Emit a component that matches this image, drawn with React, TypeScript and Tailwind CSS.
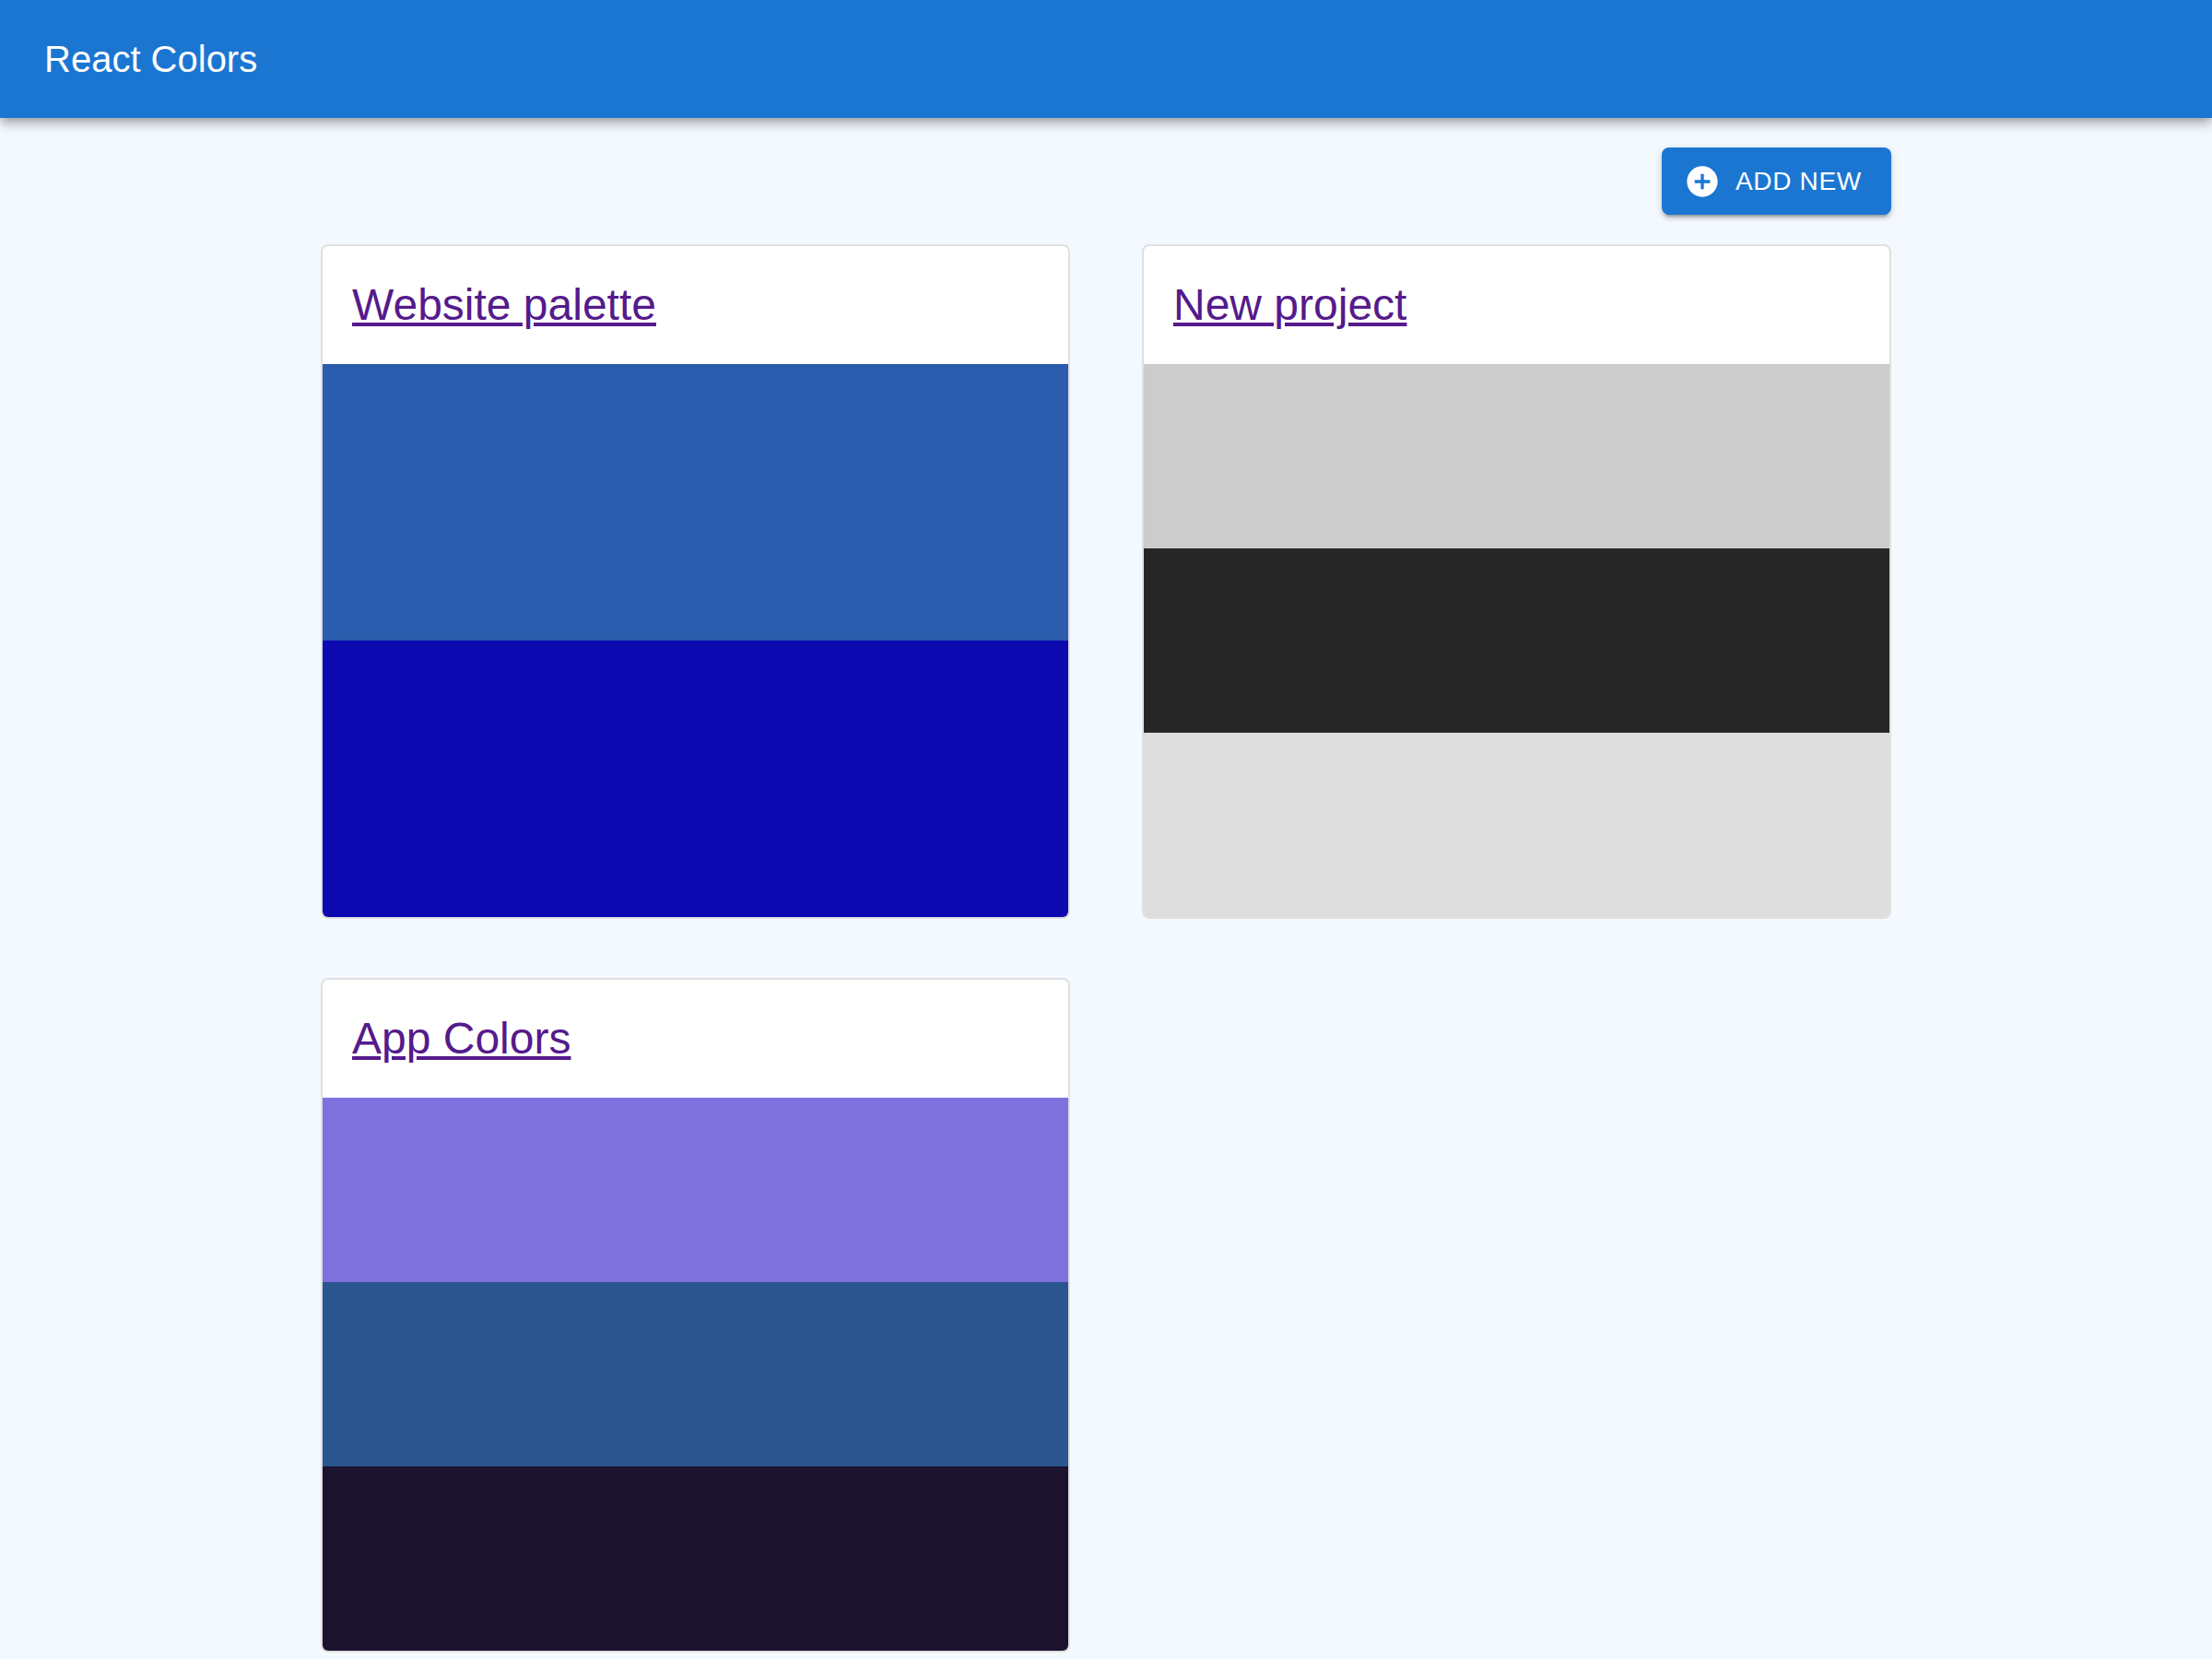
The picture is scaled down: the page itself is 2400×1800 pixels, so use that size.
import React from 'react';
import { MdAddCircle } from 'react-icons/md';

interface Palette {
  id: string;
  name: string;
  colors: string[];
}

const palettes: Palette[] = [
  { id: 'website-palette', name: 'Website palette', colors: ['#2b5cae', '#0c09b0'] },
  { id: 'new-project', name: 'New project', colors: ['#cccccc', '#262626', '#dddddd'] },
  { id: 'app-colors', name: 'App Colors', colors: ['#7e71de', '#2b568f', '#1c132f'] },
];

function Header() {
  return (
    <header className="relative flex h-32 items-center bg-[#1b76d2] px-12 text-white shadow-[0_4px_8px_-2px_rgba(0,0,0,0.2),0_8px_10px_0_rgba(0,0,0,0.14),0_2px_20px_0_rgba(0,0,0,0.12)]">
      <h1 className="text-[40px] leading-16">React Colors</h1>
    </header>
  );
}

function PaletteCard({ palette }: { palette: Palette }) {
  return (
    <article className="overflow-hidden rounded-lg border-2 border-[#e0e0e0] bg-white">
      <h2 className="p-8 text-5xl leading-16">
        <a
          href={`#${palette.id}`}
          className="text-[#551a8b] underline decoration-4 underline-offset-3"
        >
          {palette.name}
        </a>
      </h2>
      <div className="flex h-[600px] flex-col">
        {palette.colors.map((color) => (
          <div key={color} className="flex-1" style={{ backgroundColor: color }} />
        ))}
      </div>
    </article>
  );
}

export default function App() {
  return (
    <div className="min-h-screen bg-[#f4f9ff] font-['Helvetica_Neue','Liberation_Sans',Arial,sans-serif]">
      <Header />
      <main className="mx-auto max-w-[1800px] px-12 pt-8">
        <div className="mb-8 flex justify-end">
          <button
            type="button"
            className="flex cursor-pointer items-center gap-4 rounded-lg bg-[#1b76d2] py-3 pr-8 pl-6 text-[28px] leading-[49px] tracking-wide text-white uppercase shadow-[0_6px_2px_-4px_rgba(0,0,0,0.2),0_4px_4px_0_rgba(0,0,0,0.14),0_2px_10px_0_rgba(0,0,0,0.12)]"
          >
            <MdAddCircle size={40} aria-hidden="true" />
            Add new
          </button>
        </div>

        <div className="grid grid-cols-1 gap-x-[78px] gap-y-16 md:grid-cols-2">
          {palettes.map((palette) => (
            <PaletteCard key={palette.id} palette={palette} />
          ))}
        </div>
      </main>
    </div>
  );
}
